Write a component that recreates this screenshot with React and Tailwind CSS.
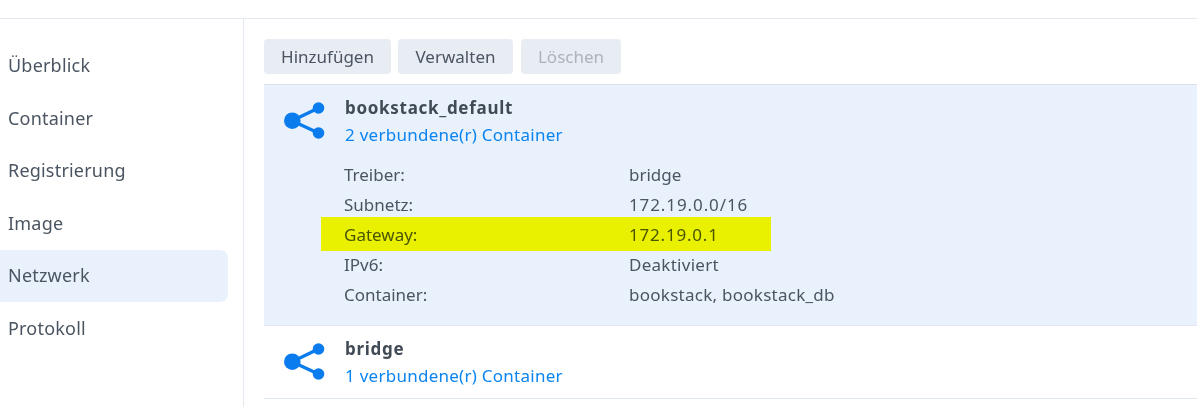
import React from "react";

const navItems = ["Überblick", "Container", "Registrierung", "Image", "Netzwerk", "Protokoll"];

const details = [
    ["Treiber:", "bridge", ""],
    ["Subnetz:", "172.19.0.0/16", "tracking-[0.9px]"],
    ["Gateway:", "172.19.0.1", "tracking-[0.8px]"],
    ["IPv6:", "Deaktiviert", "tracking-[0.27px]"],
    ["Container:", "bookstack, bookstack_db", "tracking-[0.26px]"],
];

const ShareIcon = () => (
    <svg width="42" height="40" viewBox="0 0 42 40" className="shrink-0 text-[#0a7ced]">
        <path d="M8 19.7 L34.5 7 M8 19.7 L34.5 32" stroke="currentColor" strokeWidth="3.4" fill="none" />
        <circle cx="8.3" cy="19.7" r="8.3" fill="currentColor" />
        <circle cx="34.5" cy="7" r="5.8" fill="currentColor" />
        <circle cx="34.5" cy="32" r="5.8" fill="currentColor" />
    </svg>
);

const NetworkRow = ({ name, count, active, children }) => (
    <div className={`border-b border-[#e1e8f1] pl-5 ${active ? "bg-[#e9f1fc] h-[242px] border-t border-t-[#d8e2f0]" : "h-[73px]"}`}>
        <div className={`flex ${active ? "pt-[9px]" : "pt-[9px]"}`}>
            <div className={active ? "pt-[7px]" : "pt-[7px]"}>
                <ShareIcon />
            </div>
            <div className="ml-[19px]">
                <div className="text-[17px] leading-[27px] font-bold tracking-[0.7px] text-[#414b55]">{name}</div>
                <div className="text-[17px] leading-[27px] tracking-[0.26px] text-[#0a84f0]">{count}</div>
            </div>
        </div>
        {children}
    </div>
);

export default function App() {
    return (
        <div className="w-[1197px] h-[407px] overflow-hidden bg-white text-[#4a5561] font-['Noto_Sans',sans-serif] text-[17px]">
            <div className="h-[19px] border-b border-[#e3e9f1]" />
            <div className="flex h-[388px]">
                <aside className="w-[244px] shrink-0 border-r border-[#e3e9f1] pt-[20.3px] pr-[15px]">
                    {navItems.map((item) => (
                        <div
                            key={item}
                            className={`h-[52.6px] flex items-center pl-2 text-[18px] tracking-[0.2px] rounded-r-lg ${item === "Netzwerk" ? "bg-[#e9f1fc]" : ""}`}
                        >
                            {item}
                        </div>
                    ))}
                </aside>
                <main className="flex-1 pl-5 pt-5">
                    <div className="flex h-[35px] text-[17px]">
                        <button className="w-[127px] rounded bg-[#e8ecf3]">Hinzufügen</button>
                        <button className="w-[115px] ml-[7px] rounded bg-[#e8ecf3]">Verwalten</button>
                        <button className="w-[100px] ml-2 rounded bg-[#e8ecf3] text-[#adb3bc]">Löschen</button>
                    </div>
                    <div className="mt-[10px]">
                        <NetworkRow name="bookstack_default" count="2 verbundene(r) Container" active>
                            <div className="relative mt-[12px] ml-[60px]">
                                {details.map(([label, value, spacing]) => (
                                    <div key={label} className="flex h-[30px] items-center">
                                        <div className="w-[285px]">{label}</div>
                                        <div className={spacing}>{value}</div>
                                    </div>
                                ))}
                                <div className="absolute left-[-23px] top-[57px] w-[450px] h-[34px] bg-[#ffff00] mix-blend-multiply" />
                            </div>
                        </NetworkRow>
                        <NetworkRow name="bridge" count="1 verbundene(r) Container" />
                    </div>
                </main>
            </div>
        </div>
    );
}
